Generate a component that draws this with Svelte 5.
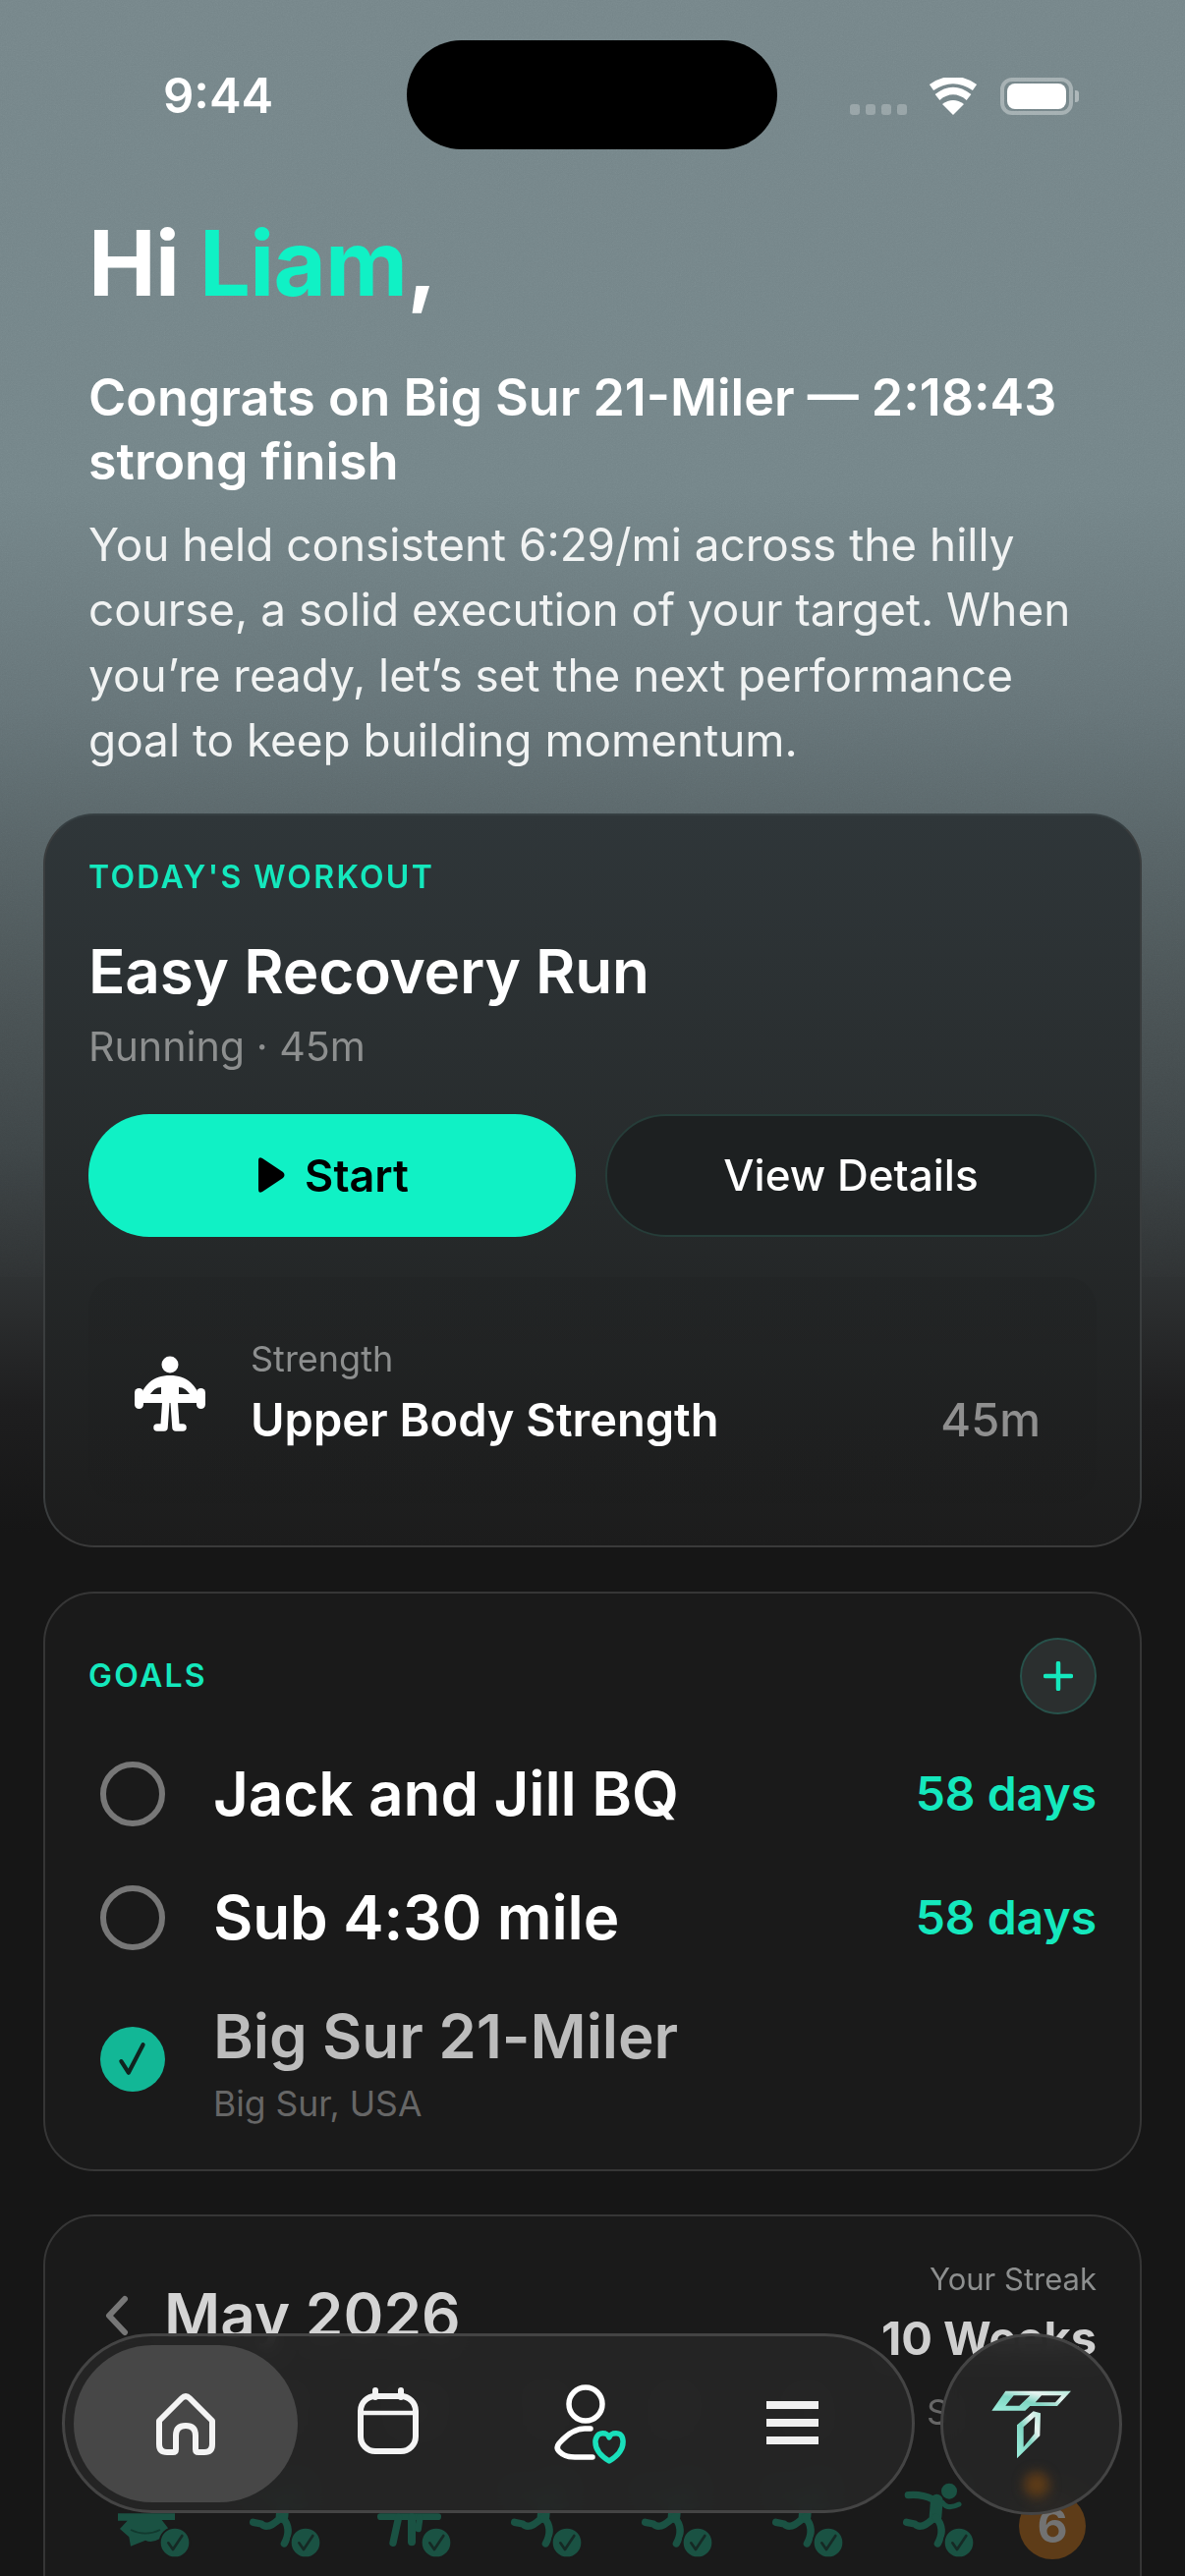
<script>
  const days = ['M', 'T', 'W', 'T', 'F', 'S', 'S'];
  const kinds = ['lift', 'run', 'climb', 'run', 'run', 'run', 'run'];
</script>

<div class="page">
  <svg class="grain" width="1206" height="1300" aria-hidden="true">
    <filter id="grain"><feTurbulence type="fractalNoise" baseFrequency="0.8" numOctaves="2" stitchTiles="stitch" /><feColorMatrix type="saturate" values="0" /></filter>
    <rect width="1206" height="1300" filter="url(#grain)" />
  </svg>

  <div class="status">
    <span class="time">9:44</span>
    <div class="island"></div>
    <div class="indicators">
      <div class="dots"><i></i><i></i><i></i><i></i></div>
      <svg class="wifi" width="50" height="38" viewBox="0 0 50 38">
        <path d="M25 38 L14 27 Q25 19 36 27 Z" fill="#fff" />
        <path d="M9 20 Q25 7 41 20" fill="none" stroke="#fff" stroke-width="7.5" />
        <path d="M3 10 Q25 -5 47 10" fill="none" stroke="#fff" stroke-width="7.5" />
      </svg>
      <div class="battery"><div class="charge"></div></div>
      <span class="nub"></span>
    </div>
  </div>

  <header class="hero">
    <h1>Hi <span class="teal">Liam</span>,</h1>
    <h2>Congrats on Big Sur 21-Miler — 2:18:43 strong finish</h2>
    <p>You held consistent 6:29/mi across the hilly course, a solid execution of your target. When you’re ready, let’s set the next performance goal to keep building momentum.</p>
  </header>

  <section class="card workout">
    <div class="label">TODAY'S WORKOUT</div>
    <div class="title">Easy Recovery Run</div>
    <div class="sub">Running · 45m</div>
    <div class="actions">
      <button class="btn start">
        <svg width="30" height="38" viewBox="0 0 30 38"><path d="M3 4 Q3 0 7 2 L28 16 Q31 19 28 22 L7 36 Q3 38 3 34 Z" fill="#000" /></svg>
        Start
      </button>
      <button class="btn details">View Details</button>
    </div>
    <div class="strength">
      <svg class="lift" width="86" height="80" viewBox="0 0 86 80">
        <circle cx="43" cy="9" r="8.5" fill="#fff" />
        <path fill="#fff" fill-rule="evenodd" d="M12 48 C14 30 26 20 43 20 C60 20 72 30 74 48 Z M23 39 C26 35 29 32 34 32 V39 Z M63 39 C60 35 57 32 52 32 V39 Z" />
        <rect x="7" y="33" width="9" height="21" rx="4.5" fill="#fff" />
        <rect x="70" y="33" width="9" height="21" rx="4.5" fill="#fff" />
        <path d="M39 44 L37 73 H30 M47 44 L49 73 H56" fill="none" stroke="#fff" stroke-width="7.5" stroke-linecap="round" stroke-linejoin="round" />
        <rect x="36" y="25" width="14" height="22" fill="#fff" />
      </svg>
      <div class="strength-text">
        <div class="kind">Strength</div>
        <div class="name">Upper Body Strength</div>
      </div>
      <div class="dur">45m</div>
    </div>
  </section>

  <section class="card goals">
    <div class="goals-head">
      <div class="label">GOALS</div>
      <button class="add" aria-label="Add goal">
        <svg width="30" height="30" viewBox="0 0 30 30"><path d="M15 2 V28 M2 15 H28" stroke="#14e8bd" stroke-width="4.5" stroke-linecap="round" /></svg>
      </button>
    </div>
    <div class="goal"><span class="ring"></span><span class="goal-name">Jack and Jill BQ</span><span class="days">58 days</span></div>
    <div class="goal"><span class="ring"></span><span class="goal-name">Sub 4:30 mile</span><span class="days">58 days</span></div>
    <div class="goal done">
      <span class="tick">
        <svg width="38" height="38" viewBox="0 0 34 36"><path d="M6 20 L13 31 L27 4" fill="none" stroke="#10231f" stroke-width="4" stroke-linecap="round" stroke-linejoin="round" /></svg>
      </span>
      <div>
        <div class="goal-name">Big Sur 21-Miler</div>
        <div class="where">Big Sur, USA</div>
      </div>
    </div>
  </section>

  <section class="card calendar">
    <div class="cal-head">
      <div class="month">
        <svg width="26" height="42" viewBox="0 0 26 42"><path d="M21 4 L5 21 L21 38" fill="none" stroke="#777" stroke-width="6" stroke-linecap="round" stroke-linejoin="round" /></svg>
        <span>May 2026</span>
      </div>
      <div class="streak">
        <div class="streak-label">Your Streak</div>
        <div class="streak-value">10 Weeks</div>
      </div>
    </div>
    <div class="letters">
      {#each days as d}<span>{d}</span>{/each}
    </div>
    <div class="week">
      {#each kinds as kind}
        <svg class="activity" width="97" height="87" viewBox="0 0 291 261">
          {#if kind === 'run'}
            <circle cx="210" cy="50" r="24" fill="#1a5243" />
            <g fill="none" stroke="#1a5243" stroke-linecap="round" stroke-linejoin="round">
              <path d="M85 62 Q125 58 160 75" stroke-width="22" />
              <path d="M190 85 Q205 108 240 90" stroke-width="15" />
              <path d="M172 78 L168 128" stroke-width="38" />
              <path d="M165 130 Q125 170 105 150 L80 145" stroke-width="22" />
              <path d="M170 130 Q200 165 175 210" stroke-width="22" />
            </g>
          {:else if kind === 'lift'}
            <path fill="#1a5243" d="M66 118 H240 V138 H200 L225 170 Q180 215 150 200 L105 218 L100 190 L72 165 L95 140 H66 Z" />
            <path d="M105 168 Q150 190 195 168" fill="none" stroke="#123a2f" stroke-width="5" />
          {:else}
            <g fill="none" stroke="#1a5243" stroke-linecap="round" stroke-linejoin="round">
              <path d="M70 128 H245" stroke-width="20" />
              <path d="M125 130 L108 208" stroke-width="22" />
              <path d="M165 130 V205" stroke-width="24" />
              <path d="M190 130 L185 165" stroke-width="20" />
            </g>
          {/if}
          <circle cx="240" cy="207" r="46" fill="#1a5243" stroke="#1a1a1a" stroke-width="6" />
          <path d="M220 208 L234 228 L262 186" fill="none" stroke="#162a25" stroke-width="8" stroke-linecap="round" stroke-linejoin="round" />
        </svg>
      {/each}
      <div class="today">6</div>
    </div>
  </section>

  <nav class="tabbar">
    <div class="pill">
      <div class="tab active">
        <svg width="66" height="68" viewBox="0 0 66 68"><path d="M6 31 L29 8 Q33 4 37 8 L60 31 V55 Q60 63 52 63 H46 Q43 63 43 60 V46 Q43 36 33 36 Q23 36 23 46 V60 Q23 63 20 63 H14 Q6 63 6 55 Z" fill="none" stroke="#f4f4f4" stroke-width="6" stroke-linejoin="round" /></svg>
      </div>
      <div class="tab cal">
        <svg width="68" height="68" viewBox="0 0 68 68"><path d="M21 3 V10 M47 3 V10" stroke="#f4f4f4" stroke-width="6" stroke-linecap="round" /><rect x="6" y="9" width="56" height="56" rx="15" fill="none" stroke="#f4f4f4" stroke-width="6" /><path d="M6 26 H62" stroke="#f4f4f4" stroke-width="4.5" /></svg>
      </div>
      <div class="tab profile">
        <svg width="80" height="82" viewBox="0 0 80 82">
          <circle cx="33" cy="21" r="17" fill="none" stroke="#fff" stroke-width="5.5" />
          <path d="M38 46 H32 Q19 46 6 61 Q2 66 7 70 Q12 75 22 75 H40" fill="none" stroke="#fff" stroke-width="5.5" stroke-linecap="round" />
          <path d="M57 79 Q42 70 43 58 Q45 49 53 51 Q56 52 57 55 Q58 52 61 51 Q70 49 71 58 Q72 70 57 79 Z" fill="none" stroke="#19e0bb" stroke-width="5.5" stroke-linejoin="round" />
        </svg>
      </div>
      <div class="tab menu"><i></i><i></i><i></i></div>
    </div>
    <div class="logo">
      <span class="glow"></span>
      <svg class="mark" width="130" height="110" viewBox="0 0 390 330">
        <defs>
          <linearGradient id="chrome" x1="0" y1="1" x2="1" y2="0">
            <stop offset="0" stop-color="#9eeedd" />
            <stop offset="0.45" stop-color="#7fd6c3" />
            <stop offset="0.72" stop-color="#e6f3ef" />
            <stop offset="1" stop-color="#b4e8da" />
          </linearGradient>
        </defs>
        <path fill="url(#chrome)" fill-rule="evenodd" d="M130 62 H330 L288 108 H205 L190 122 H88 Z M155 76 H205 L172 107 H130 Z M240 76 H301 L282 97 H221 Z" />
        <path fill="url(#chrome)" fill-rule="evenodd" d="M165 268 V166 L215 124 L237 130 L235 199 Z M185 172 V233 L218 193 L220 140 Z" />
      </svg>
    </div>
  </nav>
</div>

<style>
  :global(body) { margin: 0; background: #161616; }

  .page {
    position: relative;
    width: 1206px;
    height: 2622px;
    overflow: hidden;
    box-sizing: border-box;
    padding-top: 41px;
    font-family: Inter, "Noto Sans", sans-serif;
    color: #fff;
    background: linear-gradient(180deg, #76868a 0, #748589 500px, #667478 720px, #586467 860px, #4c5557 1000px, #3e4547 1170px, #2a2c2d 1340px, #1e1e1f 1430px, #161616 1560px, #161616 100%);
  }

  .grain { position: absolute; left: 0; top: 0; opacity: .1; mix-blend-mode: overlay; pointer-events: none; }

  .status {
    position: relative;
    height: 111px;
    display: flex;
    align-items: center;
  }
  .time { box-sizing: border-box; width: 414px; padding: 2px 0 0 166px; font-size: 49px; font-weight: 600; line-height: 111px; color: #fff; }
  .island { width: 377px; height: 111px; border-radius: 56px; background: #000; }
  .indicators { display: flex; align-items: center; height: 40px; padding: 2px 0 0 74px; }
  .dots { display: flex; gap: 6px; align-self: flex-end; margin-bottom: 1px; margin-right: 22px; }
  .dots i { width: 10px; height: 11px; border-radius: 3px; background: rgba(255,255,255,.25); }
  .wifi { margin-right: 23px; }
  .battery {
    box-sizing: border-box;
    width: 74px;
    height: 38px;
    border: 4px solid rgba(255,255,255,.35);
    border-radius: 12px;
    padding: 2px 3px;
  }
  .charge { height: 100%; border-radius: 8px; background: #fff; }
  .nub { width: 4px; height: 12px; margin-left: 2px; border-radius: 0 3px 3px 0; background: rgba(255,255,255,.4); }

  .hero { position: relative; padding: 66px 90px 0; }
  h1 { margin: 0; font-size: 92px; line-height: 100px; font-weight: 700; letter-spacing: -.8px; }
  h2 { margin: 54px 0 0; font-size: 52px; line-height: 65px; font-weight: 600; }
  p { margin: 20px 0 0; font-size: 45.9px; line-height: 66.4px; font-weight: 400; color: #f1f3f3; }
  .teal { color: #10f1c5; }

  .card {
    position: relative;
    box-sizing: border-box;
    width: 1118px;
    margin: 0 44px;
    padding: 0 44px;
    border: 2px solid #363636;
    border-radius: 52px;
    background: #1a1a1a;
  }
  .workout {
    margin-top: 40px;
    height: 747px;
    padding-top: 43px;
    background: linear-gradient(180deg, #2f3639 0, #272b2c 50%, #1c1c1c 100%);
    border-color: #363f42 #3a3d3e #3a3a3a;
  }
  .label { font-size: 32px; line-height: 40px; font-weight: 600; letter-spacing: 2.3px; color: #14e8bd; }
  .title { margin-top: 38px; font-size: 62px; line-height: 76px; font-weight: 600; letter-spacing: -.2px; }
  .sub { margin-top: 13px; font-size: 41.2px; line-height: 50px; color: #8d8f8f; }
  .actions { display: flex; gap: 30px; margin-top: 44px; }
  .btn {
    flex: 1;
    height: 125px;
    border-radius: 62px;
    font-family: inherit;
    font-size: 45px;
    font-weight: 600;
    display: flex;
    align-items: center;
    justify-content: center;
    gap: 20px;
  }
  .start { border: 0; background: #10f1c5; color: #000; }
  .details { border: 2px solid #263d39; background: #1d2021; color: #fff; font-weight: 500; font-size: 44px; }
  .strength {
    display: flex;
    align-items: center;
    margin-top: 41px;
    height: 230px;
    padding: 0 57px 0 40px;
    border-radius: 30px;
    background: linear-gradient(180deg, rgba(0,0,0,.05), rgba(0,0,0,.02));
  }
  .lift { margin: 10px 39px 0 0; }
  .strength-text { flex: 1; }
  .kind { padding-top: 5px; font-size: 36px; line-height: 44px; color: #8d8f8f; }
  .name { margin-top: 11px; font-size: 47px; line-height: 58px; font-weight: 600; }
  .dur { margin-top: 60px; font-size: 47px; line-height: 58px; font-weight: 500; color: #8f8f8f; }

  .goals { margin-top: 45px; height: 590px; padding-top: 45px; }
  .goals-head { display: flex; align-items: center; justify-content: space-between; height: 78px; }
  .add {
    display: flex;
    align-items: center;
    justify-content: center;
    padding: 0;
    width: 78px;
    height: 78px;
    border-radius: 50%;
    background: #2b2f2f;
    border: 2px solid #27514a;
  }
  .goal { display: flex; align-items: center; height: 126px; }
  .goals-head + .goal { margin-top: 18px; }
  .ring {
    box-sizing: border-box;
    width: 66px;
    height: 66px;
    margin: 0 49px 0 12px;
    border: 6px solid #777;
    border-radius: 50%;
    flex: none;
  }
  .goal-name { flex: 1; font-size: 62px; line-height: 80px; font-weight: 600; letter-spacing: -.1px; }
  .days { font-size: 48px; font-weight: 600; color: #14e8bd; }
  .done { height: auto; padding-top: 18px; }
  .done .goal-name { color: #bcbcbc; }
  .tick {
    display: flex;
    align-items: center;
    justify-content: center;
    width: 66px;
    height: 66px;
    margin: 0 49px 38px 12px;
    border-radius: 50%;
    background: #12b796;
    flex: none;
    align-self: flex-end;
  }
  .where { margin-top: 4px; font-size: 35.5px; line-height: 50px; color: #666; }

  .calendar { margin-top: 44px; height: 500px; padding-top: 44px; }
  .cal-head { display: flex; justify-content: space-between; }
  .month { display: flex; align-items: center; gap: 35px; height: 60px; margin-top: 27px; padding-left: 16px; font-size: 62px; line-height: 76px; font-weight: 600; color: #d4d4d4; }
  .streak { text-align: right; }
  .streak-label { font-size: 31px; line-height: 40px; color: #8d8f8f; }
  .streak-value { margin-top: 10px; font-size: 47px; line-height: 60px; font-weight: 700; color: #cfcfcf; }
  .letters { display: grid; grid-template-columns: repeat(7, 133px); margin-top: 23px; font-size: 36px; line-height: 44px; color: #666; text-align: center; }
  .week { display: grid; grid-template-columns: repeat(7, 133px) 1fr; align-items: start; margin: 42px 0 0 -10px; }
  .activity { justify-self: center; }
  .today {
    width: 68px;
    height: 68px;
    margin: 18px 0 0 26px;
    border-radius: 50%;
    background: #5e3c18;
    color: #727272;
    font-size: 48px;
    font-weight: 700;
    line-height: 68px;
    text-align: center;
  }

  .tabbar { position: absolute; left: 63px; top: 2375px; display: flex; gap: 26px; }
  .pill {
    box-sizing: border-box;
    width: 868px;
    height: 183px;
    display: flex;
    align-items: center;
    padding: 0 0 0 9px;
    border-radius: 92px;
    border: 3px solid #444;
    background: rgba(38,38,38,.93);
    backdrop-filter: blur(10px);
  }
  .tab { display: flex; align-items: center; justify-content: center; }
  .active { width: 228px; height: 160px; border-radius: 80px; background: #474747; }
  .cal { width: 68px; margin: -6px 0 0 58px; }
  .profile { width: 80px; margin-left: 134px; }
  .menu { flex-direction: column; gap: 10px; width: 53px; margin: -2px 0 0 137px; }
  .menu i { width: 53px; height: 8px; background: #f0f0f0; }
  .logo {
    position: relative;
    box-sizing: border-box;
    width: 185px;
    height: 185px;
    border-radius: 50%;
    border: 3px solid #444;
    background: rgba(38,38,38,.93);
    backdrop-filter: blur(10px);
    display: flex;
    align-items: center;
    justify-content: center;
    overflow: hidden;
  }
  .mark { margin-right: 9px; }
  .glow { position: absolute; left: 82px; top: 138px; width: 26px; height: 26px; border-radius: 50%; background: #5e3c18; filter: blur(6px); }
</style>
